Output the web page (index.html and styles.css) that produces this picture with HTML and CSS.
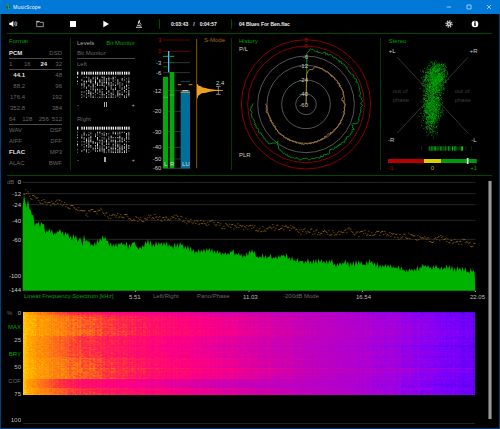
FILE: index.html
```html
<!DOCTYPE html>
<html lang="en">
<head>
<meta charset="utf-8">
<title>MusicScope</title>
<link rel="stylesheet" href="styles.css">
</head>
<body>
<div class="window">
  <header class="titlebar">
    <svg class="app-icon" viewBox="0 0 18 18" aria-hidden="true"><circle cx="9" cy="9" r="9" fill="#17817f"/><path d="M4 12l3-6 2 8 2-11 2 8 2-2" fill="none" stroke="#0b3b52" stroke-width="2"/><path d="M8 3l3 2-2 4 3 6" fill="none" stroke="#63c3a0" stroke-width="2"/></svg>
    <h1 class="app-name">MusicScope</h1>
    <button class="win-btn" aria-label="Minimize"><svg viewBox="0 0 18 18"><path d="M2 9h13"/></svg></button>
    <button class="win-btn" aria-label="Maximize"><svg viewBox="0 0 18 18"><path d="M3 3h12v12H3z"/></svg></button>
    <button class="win-btn" aria-label="Close"><svg viewBox="0 0 18 18"><path d="M3 3l12 12M15 3L3 15"/></svg></button>
  </header>

  <nav class="toolbar">
    <button class="tool" aria-label="Volume"><svg viewBox="0 0 30 30"><path d="M4 11h5l7-6v19l-7-6H4z" fill="#fff"/><path d="M19 10q3 5 0 9M22 7q5 8 0 15M25 8q4 6 0 13" fill="none" stroke="#ccc" stroke-width="2"/></svg></button>
    <button class="tool" aria-label="Open"><svg viewBox="0 0 30 30"><path d="M5 23V7h8l2 3h10v13z" fill="none" stroke="#ddd" stroke-width="2"/><path d="M5 7h8v3H5z" fill="#ddd"/></svg></button>
    <button class="tool" aria-label="Stop"><svg viewBox="0 0 30 30"><path d="M6 6h18v18H6z" fill="#fff"/></svg></button>
    <button class="tool" aria-label="Play"><svg viewBox="0 0 30 30"><path d="M7 5l17 10L7 25z" fill="#fff"/></svg></button>
    <button class="tool" aria-label="Analyze"><svg viewBox="0 0 30 30"><path d="M15 3l4 2-4 10-4-2zM6 23h18v3H6zM9 17h9v3H9z" fill="#ddd"/><path d="M18 11q6 5 1 12" fill="none" stroke="#ddd" stroke-width="2"/></svg></button>
    <p class="time"><span>0:03:43</span><span>/</span><span>0:04:57</span></p>
    <p class="track">04 Blues For Ben.flac</p>
    <button class="tool" aria-label="Settings"><svg viewBox="0 0 30 30"><circle cx="15" cy="15" r="7" fill="#ccc"/><circle cx="15" cy="15" r="9" fill="none" stroke="#ccc" stroke-width="4" stroke-dasharray="4 3"/><circle cx="15" cy="15" r="3" fill="#555"/></svg></button>
    <button class="tool" aria-label="Info"><svg viewBox="0 0 30 30"><circle cx="15" cy="15" r="10" fill="#fff"/><path d="M13 7h4v4h-4zM12 13h5v8h-4v-6h-1z" fill="#000"/></svg></button>
  </nav>

  <section class="panels">
    <div class="panel format">
      <h2>Format</h2>
      <div class="row pair ruled"><button class="on">PCM</button><button>DSD</button></div>
      <div class="row four ruled"><button>1</button><button>16</button><button class="on">24</button><button>32</button></div>
      <div class="row pair rates"><button class="on">44.1</button><button>48</button></div>
      <div class="row pair rates"><button>88.2</button><button>96</button></div>
      <div class="row pair rates"><button>176.4</button><button>192</button></div>
      <div class="row pair rates"><button>352.8</button><button>384</button></div>
      <div class="row four ruled"><button>64</button><button>128</button><button>256</button><button>512</button></div>
      <div class="row pair"><button>WAV</button><button>DSF</button></div>
      <div class="row pair"><button>AIFF</button><button>DFF</button></div>
      <div class="row pair"><button class="on">FLAC</button><button>MP3</button></div>
      <div class="row pair"><button>ALAC</button><button>BWF</button></div>
    </div>

    <div class="panel levels">
      <div class="tabs"><button>Levels</button><button class="active">Bit Monitor</button></div>
      <div class="row ruled">Bit Monitor</div>
      <div class="row">Left</div>
      <svg class="bits" viewBox="0 0 174 84" aria-hidden="true"></svg>
      <div class="balance"><span>-</span><i class="mark double"></i><span>+</span></div>
      <div class="row">Right</div>
      <svg class="bits" viewBox="0 0 174 84" aria-hidden="true"></svg>
      <div class="balance"><span>-</span><i class="mark"></i><span>+</span></div>
    </div>

    <div class="panel meters">
      <svg id="meters" viewBox="0 12 249 396">
        <g class="scale" id="meterScale"></g>
        <path d="M45 18h81M45 52h81" stroke="#600" stroke-width="3"/>
        <path d="M45 86h81M45 116h81M45 170h81M45 232h81M45 293h81M45 340h81M45 375h81M45 403h81" stroke="#333" stroke-width="3"/>
        <path d="M45 128h15v275H45zM65 114h14v289H65z" fill="#00aa0b"/>
        <path d="M45 190h15M65 183h14" stroke="#20d020" stroke-width="3"/>
        <path d="M45 67h15M65 67h14" stroke="#00b050" stroke-width="3"/>
        <path d="M45 98h13M65 86h14" stroke="#006a00" stroke-width="3"/>
        <path d="M62 51v64" stroke="#4cc4f0" stroke-width="4"/>
        <path d="M98 172h28v231H98z" fill="#00709a"/>
        <path d="M98 143h28" stroke="#004b66" stroke-width="3"/>
        <path d="M98 175h28" stroke="#a58a60" stroke-width="4"/><path d="M103 170h18" stroke="#ddd" stroke-width="3"/>
        <path d="M90 152h10M122 152h11" stroke="#d98200" stroke-width="3"/>
        <text x="48" y="396" class="bar-label">L</text><text x="66" y="396" class="bar-label">R</text><text x="102" y="396" class="bar-label">LU</text>
        <path d="M146 15v388" stroke="#8a5500" stroke-width="3"/>
        <path d="M147 149l4 3 1 3 7 2 3 3 10 2 12 3 18 2 23 1v2l-25 1-15 2-10 3-14 2-6 4-4 3-2 6-2 4z" fill="#f0a020"/>
        <path d="M211 157v24M204 157h14M204 181h14" stroke="#bbb" stroke-width="2" fill="none"/>
        <text x="204" y="152" class="light">2.4</text>
        <text x="168" y="24" class="amber">S-Mode</text>
      </svg>
    </div>

    <div class="panel history">
      <svg id="history" viewBox="6 12 444 396">
        <g fill="none" stroke="#555" stroke-width="3"><circle cx="228" cy="211" r="31"/><circle cx="228" cy="211" r="73"/><circle cx="228" cy="211" r="117"/><circle cx="228" cy="211" r="145"/></g>
        <g fill="none" stroke="#880000" stroke-width="3"><circle cx="228" cy="211" r="175"/><circle cx="228" cy="211" r="194"/></g>
        <path id="histGreen" fill="none" stroke="#008a12" stroke-width="3"/>
        <path id="histAmber" fill="none" stroke="#b5782a" stroke-width="3"/>
        <g class="scale mid"><text x="228" y="25" class="red">3</text><text x="228" y="42" class="red">0</text><text x="226" y="74">-6</text><text x="221" y="101">-12</text><text x="221" y="145">-24</text><text x="221" y="186">-40</text><text x="221" y="218">-60</text></g>
        <text x="27" y="27" class="green">History</text>
        <text x="27" y="50" class="light">P/L</text>
        <text x="27" y="369" class="light">PLR</text>
      </svg>
    </div>

    <div class="panel stereo">
      <svg id="stereo" viewBox="3 12 333 396">
        <path d="M52 70l212 227M264 70L52 297" stroke="#333" stroke-width="3"/>
        <g id="cloud"></g><g id="trail"></g>
        <text x="26" y="27" class="green">Stereo</text>
        <g class="light"><text x="26" y="57">+L</text><text x="269" y="57">+R</text><text x="24" y="323">-R</text><text x="274" y="323">-L</text></g>
        <g class="faint"><text x="38" y="177">out of</text><text x="38" y="203">phase</text><text x="224" y="177">out of</text><text x="224" y="203">phase</text></g>
        <path d="M24 375h108v12H24z" fill="#b80000"/><path d="M132 375h52v12h-52z" fill="#d8d000"/><path d="M184 375h106v12H184z" fill="#009a0c"/>
        <path d="M263 372v18" stroke="#cfe8cf" stroke-width="5"/>
        <text x="24" y="408" class="red">-1</text><text x="152" y="408" class="yellow">0</text><text x="271" y="408" class="green">+1</text>
      </svg>
    </div>
  </section>

  <main class="analysis">
    <div class="charts">
      <svg id="spectrum" viewBox="21 6 1434 348">
        <path d="M68 25h1358M68 59h1358M68 92h1358M68 139h1358M68 196h1358" stroke="#262626" stroke-width="3"/>
        <path id="specFill" fill="#00b300"/>
        <path id="specPeak" fill="#8a5c08"/>
        <path d="M407 350v6M747 350v6M1087 350v6M1426 350v6" stroke="#aaa" stroke-width="3"/>
        <text x="21" y="31" class="dim">dB</text>
        <g class="scale"><text x="63" y="31">0</text><text x="63" y="66">-12</text><text x="63" y="99">-24</text><text x="63" y="146">-40</text><text x="63" y="203">-60</text><text x="63" y="312">-100</text><text x="63" y="354">-144</text></g>
      </svg>
      <div class="axis">
        <button class="active">Linear Frequency Spectrum [kHz]</button><span>5.51</span><button>Left/Right</button><button>Pano/Phase</button><span>11.03</span><button>-200dB Mode</button><span>16.54</span><span>22.05</span>
      </div>
      <div class="waterfall">
        <div class="wf-scale">
          <div><span class="dim">%</span><span>0</span></div>
          <button class="active">MAX</button>
          <div><span>25</span></div>
          <button class="active">BRY</button>
          <div><span>50</span></div>
          <button>COF</button>
          <div><span>75</span></div>
        </div>
        <canvas id="waterfall" width="452" height="83"></canvas>
      </div>
      <div class="wf-end"><span>100</span></div>
    </div>
    <div class="scrollbar"></div>
  </main>
</div>
<script src="app.js"></script>
</body>
</html>
```
FILE: styles.css
```css
* { box-sizing: border-box; }
html, body { margin: 0; background: #000; }
body {
  font: 6px/10px "Liberation Sans", sans-serif;
  color: #666;
}
h1, h2, p { margin: 0; font-size: 6px; font-weight: normal; }
button {
  margin: 0;
  padding: 0;
  border: 0;
  background: none;
  font: inherit;
  color: inherit;
  text-align: left;
  white-space: nowrap;
}
svg { display: block; width: 100%; }

.window {
  display: flex;
  flex-direction: column;
  min-height: 100vh;
  border: solid #00407a;
  border-width: 0 1px 1px;
}

.titlebar {
  display: flex;
  align-items: center;
  height: 14px;
  margin: 0 -1px;
  padding: 0 1px 0 5px;
  background: #0078d7;
  color: #fff;
}
.app-icon { width: 6px; height: 6px; }
.app-name {
  flex: 1;
  margin-left: 2px;
  font-family: "Open Sans", sans-serif;
  font-size: 5px;
}
.win-btn {
  display: flex;
  justify-content: center;
  width: 20px;
}
.win-btn svg {
  width: 6px;
  fill: none;
  stroke: #e4f1fb;
  stroke-width: 2;
}

.toolbar {
  display: flex;
  align-items: center;
  height: 20px;
  margin: 0 7px 0 6px;
  border-bottom: 1px solid #004800;
  color: #eee;
}
.tool { width: 10px; height: 10px; margin-right: 23px; }
.tool:first-child { margin: 0 17px 0 1px; }
.tool:last-child { margin: 0 12px 0 16px; }
.time, .track { border-left: 1px solid #004800; font-weight: bold; font-size: 5px; }
.time {
  display: flex;
  gap: 5px;
  width: 72px;
  margin-left: -8px;
  padding-left: 11px;
}
.track { flex: 1; padding-left: 7px; }
.track + .tool { margin-right: 0; }

.panels {
  display: grid;
  grid-template-columns: 64fr 77fr 84fr 149fr 111fr;
  margin: 0 7px 0 6px;
  padding: 4px 0 5px;
  border-bottom: 1px solid #004800;
}
.panel { border-right: 1px solid #003800; }
.levels, .stereo { border-right: 0; }
.format { padding: 0 8px 0 2px; }
.format h2, .tabs { height: 10px; line-height: 6px; }
.format h2, .active { color: #00a000; }
.on { color: #e0e0e0; font-weight: bold; }
.row { height: 11px; line-height: 11px; }
.ruled { border-bottom: 1px solid #4a4a4a; }
.pair, .tabs { display: flex; justify-content: space-between; }
.rates { display: grid; grid-template-columns: 16px 1fr; }
.rates button { text-align: right; }
.four { display: grid; grid-template-columns: 10px 1fr 1fr 10px; }
.four button { text-align: center; }
.four button:first-child { text-align: left; }
.four button:last-child { text-align: right; }

.levels { padding: 0 13px 0 6px; }
.tabs button:first-child { color: #aaa; }
.bits { fill: #eee; }
.balance {
  display: flex;
  align-items: center;
  justify-content: space-between;
  height: 13px;
  margin-bottom: 3px;
  color: #aaa;
}
.mark { width: 2px; height: 5px; background: #aaa; }
.double { width: 3px; border: solid #aaa; border-width: 0 1px; background: none; }

text { font-size: 18px; fill: #999; }
.scale { text-anchor: end; }
.mid { text-anchor: middle; }
.scale text, .light text, .light { fill: #ccc; }
.bar-label { fill: #ddd; }
.amber { fill: #a06810; }
.scale .red, text.red { fill: #c00000; }
.green { fill: #00a000; }
.yellow { fill: #b8b000; }
.faint text { fill: #3c3c3c; }
.dim { fill: #666; color: #666; }

.analysis {
  display: flex;
  flex: 1;
  gap: 3px;
  margin: 0 7px 0 6px;
}
.charts { flex: 1; }
.scrollbar {
  width: 4px;
  margin: 5px 0 9px;
  border: solid #555;
  border-width: 0 1px;
  background: #999;
}
.axis {
  display: grid;
  grid-template-columns: 105fr 24fr 44fr 46fr 40fr 73fr 114fr 15fr;
  align-items: start;
  height: 20px;
  padding-left: 17px;
  line-height: 8px;
}
.axis span { padding-top: 1px; color: #bbb; }
.waterfall {
  display: grid;
  grid-template-columns: 14px 1fr;
  gap: 2px;
  padding-right: 10px;
}
.wf-scale {
  display: flex;
  flex-direction: column;
  justify-content: space-between;
  height: 86px;
  margin-top: -1px;
  line-height: 5px;
  color: #bbb;
}
.wf-scale div { display: flex; justify-content: flex-end; }
.wf-scale .dim { margin-right: auto; }
.wf-scale button { text-align: right; }
.wf-scale button:not(.active) { color: #666; }
canvas { display: block; width: 100%; height: 83px; }
.wf-end {
  display: grid;
  grid-template-columns: 14px 1fr;
  gap: 2px;
  margin: 18px 10px 0 0;
  color: #bbb;
  line-height: 10px;
  text-align: right;
}
.wf-end::after { content: ""; height: 8px; border-bottom: 1px solid #222; }
```
FILE: app.js
```js
// Seeded generator, so the drawn signal is the same on every load.
let seed = 7;
function rnd() {
  seed = (seed * 1664525 + 1013904223) % 4294967296;
  return seed / 4294967296;
}
const el = id => document.getElementById(id);

// Linear interpolation over a list of [x, y...] stops.
function at(points, x) {
  let i = 1;
  while (i < points.length - 1 && points[i][0] < x) i++;
  const a = points[i - 1], b = points[i];
  const t = Math.min(1, Math.max(0, (x - a[0]) / (b[0] - a[0])));
  return a.slice(1).map((v, k) => v + (b[k + 1] - v) * t);
}
const pairs = s => s.split(' ').map(p => p.split(',').map(Number));

// Bit monitors
document.querySelectorAll('.bits').forEach(svg => {
  let out = '';
  for (let c = 0; c < 24; c++) {
    if (c === 1) continue;
    const x = Math.round(c * 6.7);
    out += `<rect x="${x}" y="5" width="4" height="9"/>`;
    for (let r = 0; r < 17; r++) {
      if (rnd() < (c < 3 ? 0.35 : 0.62)) {
        out += `<rect x="${x}" y="${20 + r * 4}" width="3" height="4" opacity="${(0.3 + rnd() * 0.7).toFixed(2)}"/>`;
      }
    }
  }
  svg.innerHTML = out;
});

// Level meter scale
el('meterScale').innerHTML = [[3, 18], [0, 52], [-3, 86], [-6, 116], [-12, 170], [-20, 232], [-30, 293], [-40, 340], [-50, 375], [-60, 401]]
  .map(([v, y]) => `<text x="40" y="${y + 6}"${v >= 0 ? ' class="red"' : ''}>${v}</text>`).join('');

// History traces: [degrees, radius]
function polar(points, jitter, start) {
  let d = start;
  for (let a = points[0][0]; a <= 271; a += 1.2) {
    const r = at(points, a)[0] + (rnd() - 0.5) * jitter;
    const t = a * Math.PI / 180;
    d += `L${(228 + r * Math.sin(t)).toFixed(1)} ${(211 - r * Math.cos(t)).toFixed(1)}`;
  }
  return d;
}
el('histGreen').setAttribute('d', polar(pairs('1,155 3,164 15,162 30,165 45,163 60,166 80,165 92,168 105,165 111,163 113,148 117,160 135,159 150,158 152,152 155,162 180,165 195,165 205,162 213,155 217,142 222,160 235,162 250,164 262,166 271,162'), 7, 'M229 211'));
el('histAmber').setAttribute('d', polar(pairs('1,90 4,103 10,106 14,116 25,117 45,115 75,117 83,110 90,116 110,117 130,116 148,112 155,114 180,119 200,118 218,118 235,115 250,116 262,121 271,118'), 5, 'M228 211'));

// Stereo scatter and correlation trail
let dots = '';
for (let i = 0; i < 2300; i++) {
  const y = i % 2 ? 130 + (rnd() + rnd() - 1) * 52 : 220 + (rnd() + rnd() + rnd() - 1.5) * 66;
  const [cx, w] = at([[75, 172, 26], [110, 165, 38], [150, 159, 34], [190, 156, 30], [235, 154, 33], [285, 150, 20]], y);
  const x = cx + (rnd() + rnd() + rnd() - 1.5) * w * 0.9;
  dots += `<rect x="${x.toFixed(0)}" y="${y.toFixed(0)}" width="3" height="3" fill="rgb(0,${Math.round(90 + rnd() * 130)},10)" opacity=".6"/>`;
}
el('cloud').innerHTML = dots;
let trail = '';
for (let i = 0; i < 38; i++) {
  const x = 146 + i * 2.7;
  trail += `<rect x="${x.toFixed(0)}" y="337" width="3" height="13" fill="rgb(0,${Math.round(20 + rnd() * 190)},10)"/>`;
}
el('trail').innerHTML = trail + '<path d="M124 337h2v13h-2zM257 337h2v13h-2zM273 337h2v13h-2z" fill="#004000"/>';

// Spectrum: current fill and peak-hold dots
const fill = pairs('68,100 72,62 76,85 80,100 84,75 90,118 98,118 106,160 114,142 122,155 128,150 135,175 155,172 162,182 178,170 190,185 200,180 215,195 222,185 236,210 240,188 247,215 252,192 265,205 285,218 297,198 316,196 325,210 350,215 362,203 385,220 400,206 415,224 430,215 440,205 460,213 490,212 520,220 545,212 560,225 590,232 610,228 640,232 660,240 695,235 710,240 727,248 745,238 755,232 770,250 810,248 835,252 850,242 875,258 900,262 930,262 950,265 980,262 1010,272 1030,266 1050,275 1080,268 1095,273 1115,265 1140,280 1160,277 1175,283 1190,280 1210,288 1250,287 1275,276 1295,284 1320,282 1350,283 1370,290 1385,285 1405,296 1426,292');
let d = 'M68 350';
let up = false;
for (let x = 68; x <= 1426; x += 4) {
  up = !up;
  const spike = (up ? -rnd() : rnd() * 0.6) * 14;
  d += `L${x} ${(at(fill, x)[0] + (x < 90 ? 0 : spike)).toFixed(0)}`;
}
el('specFill').setAttribute('d', d + 'L1426 350z');

const peak = pairs('70,62 78,50 88,65 100,68 125,82 150,88 180,82 200,95 220,98 240,108 260,120 275,104 290,118 300,108 325,125 345,122 375,122 400,136 430,135 455,125 480,132 500,132 535,125 560,142 595,143 625,150 640,143 665,155 700,155 735,158 770,162 790,165 815,158 850,160 870,160 900,172 930,170 955,176 1000,175 1045,168 1065,180 1095,175 1125,174 1170,180 1205,188 1230,184 1265,194 1295,196 1325,190 1360,203 1390,202 1415,210 1426,204');
d = '';
for (let x = 70; x <= 1424; x += 3) {
  d += `M${x} ${(at(peak, x)[0] + (rnd() - 0.5) * 17).toFixed(0)}h3v3h-3z`;
}
el('specPeak').setAttribute('d', d);

// Waterfall
const palette = [[0, 255, 200, 0], [8, 255, 165, 0], [25, 255, 135, 12], [48, 255, 95, 35], [75, 255, 50, 62], [110, 255, 18, 100], [160, 254, 0, 130], [200, 235, 0, 150], [240, 212, 0, 168], [290, 190, 0, 190], [340, 176, 0, 208], [380, 155, 0, 228], [420, 125, 0, 250], [452, 105, 0, 248], [520, 70, 0, 220]];
const bands = [[0, 45], [2, 25], [3, 0], [7, -16], [23, -16], [24, 12], [44, 12], [46, -8], [66, -16], [67, 62], [75, 62], [76, 22], [83, 12]];
const cv = el('waterfall'), ctx = cv.getContext('2d');
const img = ctx.createImageData(452, 83);
const cols = Array.from({ length: 452 }, () => (rnd() - 0.5) * 24);
for (let y = 0; y < 83; y++) {
  let row = (rnd() - 0.5) * 30;
  if (y === 0 || y === 34) row += 40;
  if (y === 56) row -= 35;
  const band = at(bands, y)[0];
  let grain = 0;
  for (let x = 0; x < 452; x++) {
    if (x % 2 === 0) grain = (rnd() - 0.5) * 34;
    const near = Math.min(1, x / 60);
    const rowGain = Math.min(1, x / 200);
    const far = x > 200 ? Math.max(0.25, 1 - (x - 200) / 160) : 1;
    const v = Math.max(0, x + (band * far + row * rowGain + cols[x] + grain) * near);
    const c = at(palette, v);
    const i = (y * 452 + x) * 4;
    img.data[i] = c[0];
    img.data[i + 1] = c[1] + (x < 20 ? (rnd() - 0.5) * 30 : 0);
    img.data[i + 2] = c[2];
    img.data[i + 3] = 255;
  }
}
ctx.putImageData(img, 0, 0);
```
